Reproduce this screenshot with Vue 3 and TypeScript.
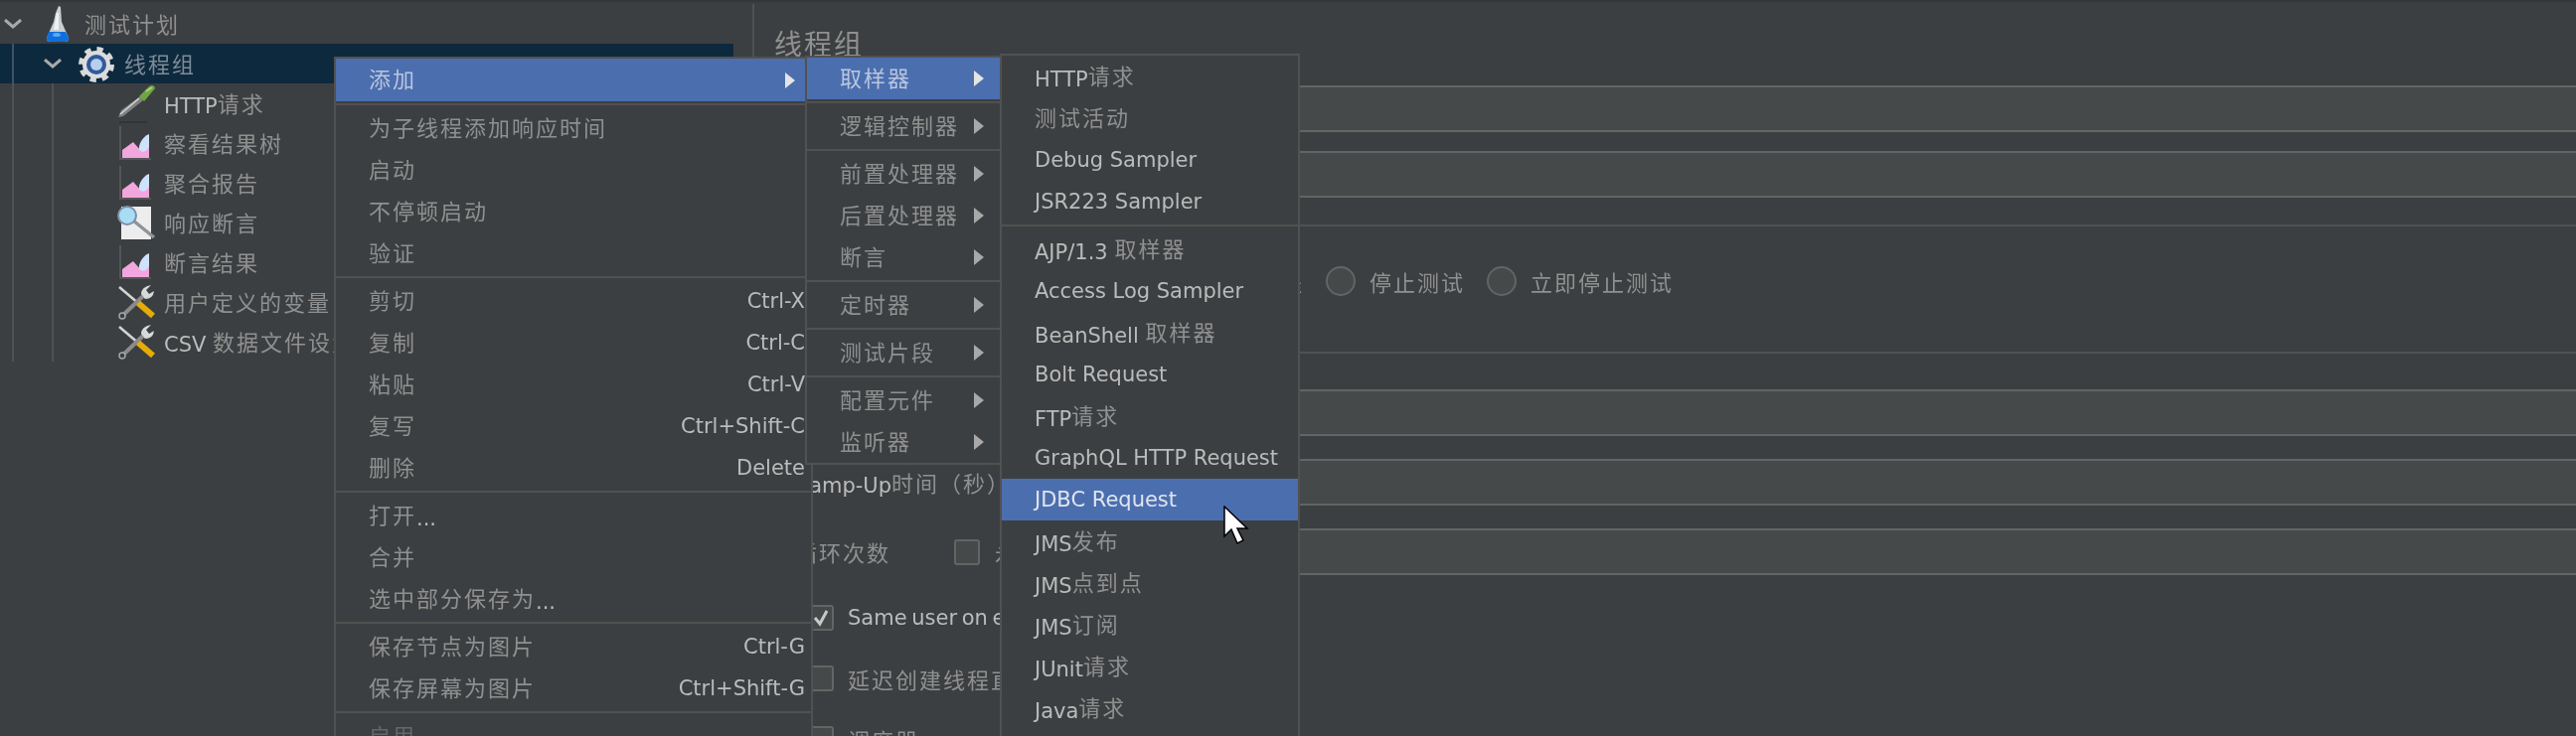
<template>
  <div class="page">
    <div class="tree">
      <div class="row">
        <svg class="twist" viewBox="0 0 18 10"><polyline points="1,1 9,8 17,1" /></svg>
        <span class="node-icon">
          <svg viewBox="0 0 40 40" width="40" height="40">
            <path d="M21 2 L23 3 L24 18 L31 34 Q32 38 27 38 L13 38 Q8 38 9 34 L16 18 L18 9 Z" fill="#c9ced2" />
            <path d="M19 9 L21 9 L21 26 L16 26 Z" fill="#eef1f3" />
            <path d="M11 28 L28 28 L31 34 Q32 38 27 38 L13 38 Q8 38 9 34 Z" fill="#0f6fdc" />
            <ellipse cx="19" cy="31" rx="4" ry="2" fill="#5fa8f0" />
          </svg>
        </span>
        <span class="txt"><span v-for="p in split('测试计划')" :class="{ cjk: p.cjk }">{{ p.t }}</span></span>
      </div>
      <div class="children">
        <div class="row selected">
          <svg class="twist" viewBox="0 0 18 10"><polyline points="1,1 9,8 17,1" /></svg>
          <span class="node-icon">
            <svg viewBox="0 0 40 40" width="40" height="40">
              <circle cx="19" cy="21" r="15" fill="none" stroke="#d8d8d8" stroke-width="6" stroke-dasharray="6 5.78" />
              <circle cx="19" cy="21" r="14" fill="#dcdcdc" />
              <circle cx="19" cy="21" r="10" fill="#2f5a9c" />
              <circle cx="19" cy="21" r="6" fill="#b7cfee" />
            </svg>
          </span>
          <span class="txt"><span v-for="p in split('线程组')" :class="{ cjk: p.cjk }">{{ p.t }}</span></span>
        </div>
        <div class="children">
          <div v-for="node in nodes" :key="node.label" class="row">
            <span class="node-icon">
              <svg v-if="node.icon === 'pipette'" viewBox="0 0 40 40" width="40" height="40">
                <path d="M1 34 L4 27 L23 13 L26 17 L6 33 Z" fill="#7f8182" />
                <path d="M3 31 L22 15" stroke="#d8d8d8" stroke-width="1.5" />
                <path d="M22 13 L32 3 Q37 0 38 5 L27 18 Z" fill="#6fa544" />
                <path d="M29 8 L35 4" stroke="#a8d37c" stroke-width="2" />
                <path d="M2 39 L30 39" stroke="#2f3233" stroke-width="1.5" />
              </svg>
              <svg v-else-if="node.icon === 'graph'" viewBox="0 0 40 40" width="40" height="40">
                <path d="M3 3 L3 36 L34 36" fill="none" stroke="#5c5f61" stroke-width="1.5" />
                <path d="M5 35 L5 27 L16 19 L24 28 L32 22 L32 35 Z" fill="#f2a6de" />
                <path d="M32 11 C25 14 21 22 22 27 C27 31 31 27 32 23 Z" fill="#cfe2fb" />
              </svg>
              <svg v-else-if="node.icon === 'lens'" viewBox="0 0 40 40" width="40" height="40">
                <path d="M4 4 L34 4 L34 37 L4 37 Z" fill="#ededed" />
                <path d="M16 18 L37 35" stroke="#8f9498" stroke-width="3.5" />
                <circle cx="10" cy="13" r="9" fill="#a9dcf5" stroke="#7d8fa8" stroke-width="2" />
              </svg>
              <svg v-else viewBox="0 0 40 40" width="40" height="40">
                <path d="M2 5 L22 22" stroke="#d4d4d4" stroke-width="2.5" />
                <path d="M5 34 L26 14" stroke="#8b8b8b" stroke-width="4" />
                <circle cx="5" cy="34" r="3" fill="#3c3f41" stroke="#a5a5a5" stroke-width="1.5" />
                <path d="M24 12 Q24 5 34 3 L29 8 L32 12 L37 9 Q36 17 28 17 Z" fill="#d9d9d9" />
                <path d="M21 21 L36 34" stroke="#e5ac06" stroke-width="6" />
              </svg>
            </span>
            <span class="txt"><span v-for="p in split(node.label)" :class="{ cjk: p.cjk }">{{ p.t }}</span></span>
          </div>
        </div>
      </div>
    </div>

    <div class="main">
      <div class="title cjk">线程组</div>
      <div class="field"><span class="field-label cjk">名称：</span><div class="input"></div></div>
      <div class="field"><span class="field-label cjk">注释：</span><div class="input"></div></div>

      <div class="group first">
        <div class="radios">
          <label v-for="o in radios" :key="o" class="radio-opt">
            <span class="radio"></span><span class="cjk">{{ o }}</span>
          </label>
        </div>
      </div>

      <div class="group second">
        <div class="field"><span class="field-label cjk">线程数：</span><div class="input"></div></div>
        <div class="field">
          <span class="field-label"><span v-for="p in split('Ramp-Up时间（秒）')" :class="{ cjk: p.cjk }">{{ p.t }}</span></span>
          <div class="input"></div>
        </div>
        <div class="field">
          <span class="loop-label cjk">循环次数</span>
          <span class="check"></span>
          <span class="forever cjk">永远</span>
          <div class="input"></div>
        </div>
        <div class="opts">
          <div class="opt">
            <span class="check on">
              <svg viewBox="0 0 24 24" width="24" height="24"><polyline points="6,12 11,18 18,5" /></svg>
            </span>
            <span class="same-user">Same user on each iteration</span>
          </div>
          <div class="opt"><span class="check"></span><span class="cjk">延迟创建线程直到需要</span></div>
          <div class="opt"><span class="check"></span><span class="cjk">调度器</span></div>
        </div>
      </div>
    </div>

    <div class="menu menu-main">
      <template v-for="(item, i) in mainMenu" :key="i">
        <div v-if="item.sep" class="sep"></div>
        <div v-else class="item" :class="{ active: item.active, off: item.off, tall: item.active }">
          <span class="label"><span v-for="p in split(item.label!)" :class="{ cjk: p.cjk }">{{ p.t }}</span></span>
          <span v-if="item.key" class="key">{{ item.key }}</span>
          <span v-if="item.sub" class="arrow"></span>
        </div>
      </template>
    </div>

    <div class="menu menu-add">
      <template v-for="(item, i) in addMenu" :key="i">
        <div v-if="item.sep" class="sep"></div>
        <div v-else class="item" :class="{ active: item.active }">
          <span class="label"><span v-for="p in split(item.label!)" :class="{ cjk: p.cjk }">{{ p.t }}</span></span>
          <span class="arrow"></span>
        </div>
      </template>
    </div>

    <div class="menu menu-sampler">
      <template v-for="(item, i) in samplerMenu" :key="i">
        <div v-if="item.sep" class="sep"></div>
        <div v-else class="item" :class="{ active: item.active }">
          <span class="label"><span v-for="p in split(item.label!)" :class="{ cjk: p.cjk }">{{ p.t }}</span></span>
        </div>
      </template>
    </div>

    <svg class="cursor" viewBox="0 0 26 40" width="26" height="40">
      <path d="M1 1 L1 31 L8 24 L14 38 L20 35 L14 23 L24 23 Z" fill="#fff" stroke="#000" stroke-width="1.5" />
    </svg>
  </div>
</template>

<script setup lang="ts">
interface MenuItem {
  label?: string
  key?: string
  sub?: boolean
  active?: boolean
  off?: boolean
  sep?: boolean
}

// 中文字符单独包一层，颜色比拉丁字母淡
const split = (text: string) => {
  const out: { t: string; cjk: boolean }[] = []
  for (const m of text.matchAll(/[\u3000-\u9fff\uff00-\uffef]+|[^\u3000-\u9fff\uff00-\uffef]+/g)) {
    out.push({ t: m[0], cjk: /[\u3000-\u9fff\uff00-\uffef]/.test(m[0]) })
  }
  return out
}

const nodes = [
  { label: 'HTTP请求', icon: 'pipette' },
  { label: '察看结果树', icon: 'graph' },
  { label: '聚合报告', icon: 'graph' },
  { label: '响应断言', icon: 'lens' },
  { label: '断言结果', icon: 'graph' },
  { label: '用户定义的变量', icon: 'tools' },
  { label: 'CSV 数据文件设置', icon: 'tools' }
]

const radios = ['继续', '启动下一进程循环', '停止线程', '停止测试', '立即停止测试']

const mainMenu: MenuItem[] = [
  { label: '添加', sub: true, active: true },
  { sep: true },
  { label: '为子线程添加响应时间' },
  { label: '启动' },
  { label: '不停顿启动' },
  { label: '验证' },
  { sep: true },
  { label: '剪切', key: 'Ctrl-X' },
  { label: '复制', key: 'Ctrl-C' },
  { label: '粘贴', key: 'Ctrl-V' },
  { label: '复写', key: 'Ctrl+Shift-C' },
  { label: '删除', key: 'Delete' },
  { sep: true },
  { label: '打开...' },
  { label: '合并' },
  { label: '选中部分保存为...' },
  { sep: true },
  { label: '保存节点为图片', key: 'Ctrl-G' },
  { label: '保存屏幕为图片', key: 'Ctrl+Shift-G' },
  { sep: true },
  { label: '启用', off: true }
]

const addMenu: MenuItem[] = [
  { label: '取样器', active: true },
  { sep: true },
  { label: '逻辑控制器' },
  { sep: true },
  { label: '前置处理器' },
  { label: '后置处理器' },
  { label: '断言' },
  { sep: true },
  { label: '定时器' },
  { sep: true },
  { label: '测试片段' },
  { sep: true },
  { label: '配置元件' },
  { label: '监听器' }
]

const samplerMenu: MenuItem[] = [
  { label: 'HTTP请求' },
  { label: '测试活动' },
  { label: 'Debug Sampler' },
  { label: 'JSR223 Sampler' },
  { sep: true },
  { label: 'AJP/1.3 取样器' },
  { label: 'Access Log Sampler' },
  { label: 'BeanShell 取样器' },
  { label: 'Bolt Request' },
  { label: 'FTP请求' },
  { label: 'GraphQL HTTP Request' },
  { label: 'JDBC Request', active: true },
  { label: 'JMS发布' },
  { label: 'JMS点到点' },
  { label: 'JMS订阅' },
  { label: 'JUnit请求' },
  { label: 'Java请求' },
  { label: 'LDAP请求' }
]
</script>

<style>
html,
body {
  margin: 0;
  background: #3c3f41;
}
</style>

<style scoped>
.page {
  position: relative;
  display: flex;
  width: 2592px;
  height: 741px;
  box-sizing: border-box;
  overflow: hidden;
  padding-top: 4px;
  background: #3c3f41;
  box-shadow: inset 0 3px 0 -1px #33373a;
  color: #bbbbbb;
  font-family: "DejaVu Sans", "Noto Sans CJK SC", sans-serif;
  font-size: 21px;
  filter: blur(0.45px);
}
.cjk {
  position: relative;
  top: -1.5px;
  color: #909090;
  font-size: 22px;
  letter-spacing: 2px;
}
.menu .cjk {
  top: -2.5px;
}
.main .cjk {
  top: -0.5px;
}
.tree {
  width: 738px;
  flex: none;
  overflow: hidden;
}
.row {
  display: flex;
  align-items: center;
  height: 40px;
  white-space: nowrap;
}
.row .twist {
  width: 18px;
  height: 10px;
  flex: none;
  padding: 0 4px;
  fill: none;
  stroke: #a9a9a9;
  stroke-width: 3;
}
.node-icon {
  display: flex;
  justify-content: center;
  width: 44px;
  flex: none;
  margin-left: 10px;
  margin-right: 5px;
}
.children {
  margin-left: 12px;
  padding-left: 26px;
  border-left: 2px solid #4e5254;
}
.children > .children .node-icon {
  margin-left: 36px;
}
.selected {
  margin-left: -40px;
  padding-left: 40px;
  background: linear-gradient(#3d5364, #3d5364) 12px 0 / 2px 100% no-repeat, #0d293e;
}
.selected .cjk {
  color: #7d8b96;
}
.main {
  flex: 1;
  margin-left: 19px;
  padding: 24px 0 0 41px;
  border-left: 2px solid #4e5254;
}
.title {
  height: 36px;
  margin-bottom: 22px;
  margin-left: -21px;
  font-size: 28px;
  letter-spacing: 2px;
  line-height: 36px;
}
.field {
  display: flex;
  align-items: center;
  margin-bottom: 19px;
}
.group .field {
  margin-bottom: 23px;
}
.field-label {
  width: 340px;
  flex: none;
  white-space: nowrap;
}
.input {
  flex: 1;
  height: 43px;
  background: #45494a;
  border-top: 2px solid #646464;
  border-bottom: 2px solid #646464;
}
.group {
  border-top: 2px solid #4e5254;
  margin-left: -41px;
  padding-left: 41px;
}
.group.first {
  margin-top: 27px;
  padding-top: 35px;
}
.group.second {
  margin-top: 51px;
  padding-top: 36px;
}
.radios {
  display: flex;
  gap: 22px;
  height: 40px;
}
.radio-opt {
  display: flex;
  align-items: center;
  gap: 14px;
  white-space: nowrap;
}
.radio {
  width: 26px;
  height: 26px;
  border: 2px solid #646464;
  border-radius: 50%;
  background: #45494a;
}
.loop-label {
  width: 160px;
  flex: none;
}
.forever {
  width: 90px;
  flex: none;
  margin-left: 15px;
}
.check {
  display: block;
  width: 22px;
  height: 22px;
  flex: none;
  border: 2px solid #646464;
  border-radius: 3px;
  background: #45494a;
}
.check svg {
  display: block;
  fill: none;
  stroke: #c8c8c8;
  stroke-width: 3;
  margin: -1px;
}
.opts {
  display: flex;
  flex-direction: column;
  gap: 21px;
  margin-left: 13px;
}
.opt {
  display: flex;
  align-items: center;
  gap: 14px;
  height: 40px;
  white-space: nowrap;
}
.same-user {
  word-spacing: -2px;
}
/* 弹出菜单盖在页面上 */
.menu {
  position: absolute;
  box-sizing: border-box;
  background: #3c3f41;
  border: 2px solid #515151;
}
.menu-main {
  left: 336px;
  top: 57px;
  width: 482px;
}
.menu-add {
  left: 810px;
  top: 56px;
  width: 198px;
}
.menu-sampler {
  left: 1006px;
  top: 54px;
  width: 302px;
}
.item {
  display: flex;
  align-items: center;
  height: 42px;
  padding: 0 6px 0 33px;
  white-space: nowrap;
}
.item.tall {
  height: 43px;
}
.item.active {
  background: #4b6eaf;
  color: #dfe5ef;
}
.item.active .cjk {
  color: #b9c6de;
}
.item.off .cjk {
  color: #666666;
}
.label {
  flex: 1;
}
.arrow {
  width: 0;
  height: 0;
  margin-right: 10px;
  border-left: 10px solid #a8a8a8;
  border-top: 8px solid transparent;
  border-bottom: 8px solid transparent;
}
.active .arrow {
  border-left-color: #e4e4e4;
}
.sep {
  height: 2px;
  margin: 2px 0;
  background: #515151;
}
.cursor {
  position: absolute;
  left: 1231px;
  top: 509px;
}
</style>
